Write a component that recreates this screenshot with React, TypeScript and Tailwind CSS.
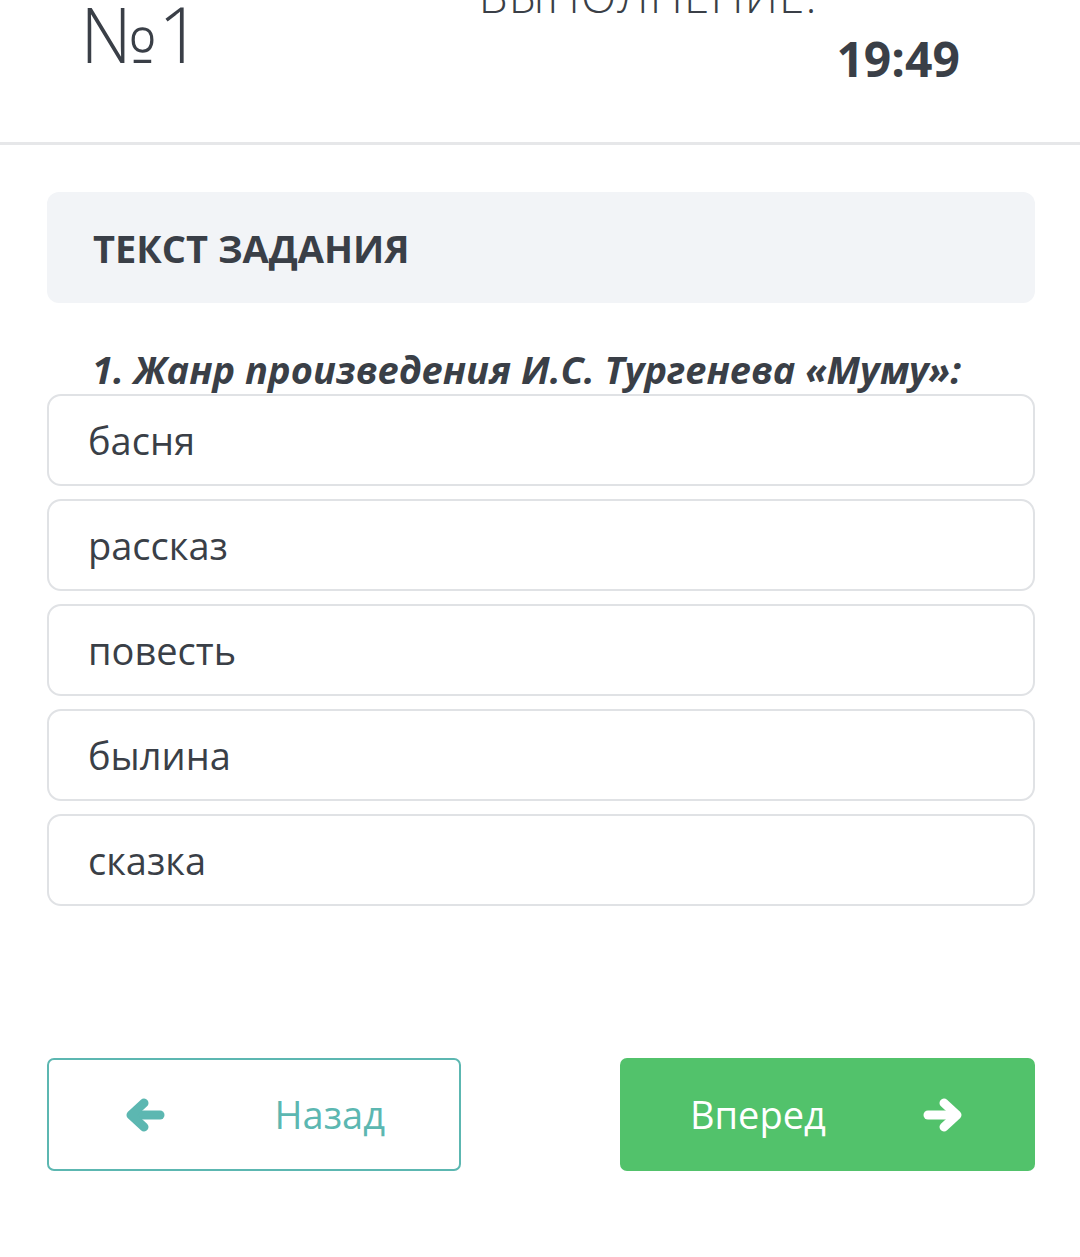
// Страница теста — вопрос с вариантами ответа
const OPTIONS = ['басня', 'рассказ', 'повесть', 'былина', 'сказка']

// жирная стрелка со скруглёнными концами
const Arrow = ({ left = false }: { left?: boolean }) => (
  <svg
    width="40"
    height="34"
    viewBox="0 0 40 34"
    fill="none"
    stroke="currentColor"
    strokeWidth="9"
    strokeLinecap="round"
    strokeLinejoin="round"
    className={left ? 'rotate-180' : ''}
  >
    <path d="M5 17 H33" />
    <path d="M21 5 L34 17 L21 29" />
  </svg>
)

export default function App() {
  return (
    <div className="min-h-[1257px] w-[1080px] overflow-hidden bg-white font-['Open_Sans',sans-serif] text-[#3a3f47]">
      {/* шапка: номер задания + таймер */}
      <header className="flex h-[145px] border-b-[3px] border-[#e6e7e9]">
        <div className="ml-[80px] mt-[-5px] text-[77px] font-light leading-none">№1</div>
        <div className="ml-[277px] flex w-[481px] flex-col">
          <span className="mt-[-28px] text-[46px] font-light leading-none tracking-wide">ВЫПОЛНЕНИЕ:</span>
          <span className="mt-[17px] self-end text-[48px] font-bold leading-none">19:49</span>
        </div>
      </header>

      <main className="pl-[47px] pr-[45px] pt-[47px]">
        <div className="flex h-[111px] items-center rounded-[12px] bg-[#f2f4f7] px-[46px]">
          <h2 className="text-[38px] font-bold leading-none">ТЕКСТ ЗАДАНИЯ</h2>
        </div>

        <p className="mt-[42px] pl-[45px] text-[38px] font-bold italic leading-[48px]">
          1. Жанр произведения И.С. Тургенева «Муму»:
        </p>

        <ul className="mt-[1px] flex flex-col gap-[13px]">
          {OPTIONS.map((opt) => (
            <li
              key={opt}
              className="flex h-[92px] items-center rounded-[14px] border-2 border-[#e0e2e5] px-[39px] text-[38px] leading-none"
            >
              {opt}
            </li>
          ))}
        </ul>

        {/* навигация */}
        <div className="mt-[152px] flex justify-between">
          <button className="flex h-[113px] w-[414px] items-center justify-between rounded-[7px] border-2 border-[#5cb7b1] pl-[76px] pr-[74px] text-[38px] text-[#5cb7b1]">
            <Arrow left />
            <span>Назад</span>
          </button>
          <button className="flex h-[113px] w-[415px] items-center justify-between rounded-[7px] bg-[#52c26b] pl-[70px] pr-[72px] text-[38px] text-white">
            <span>Вперед</span>
            <Arrow />
          </button>
        </div>
      </main>
    </div>
  )
}
